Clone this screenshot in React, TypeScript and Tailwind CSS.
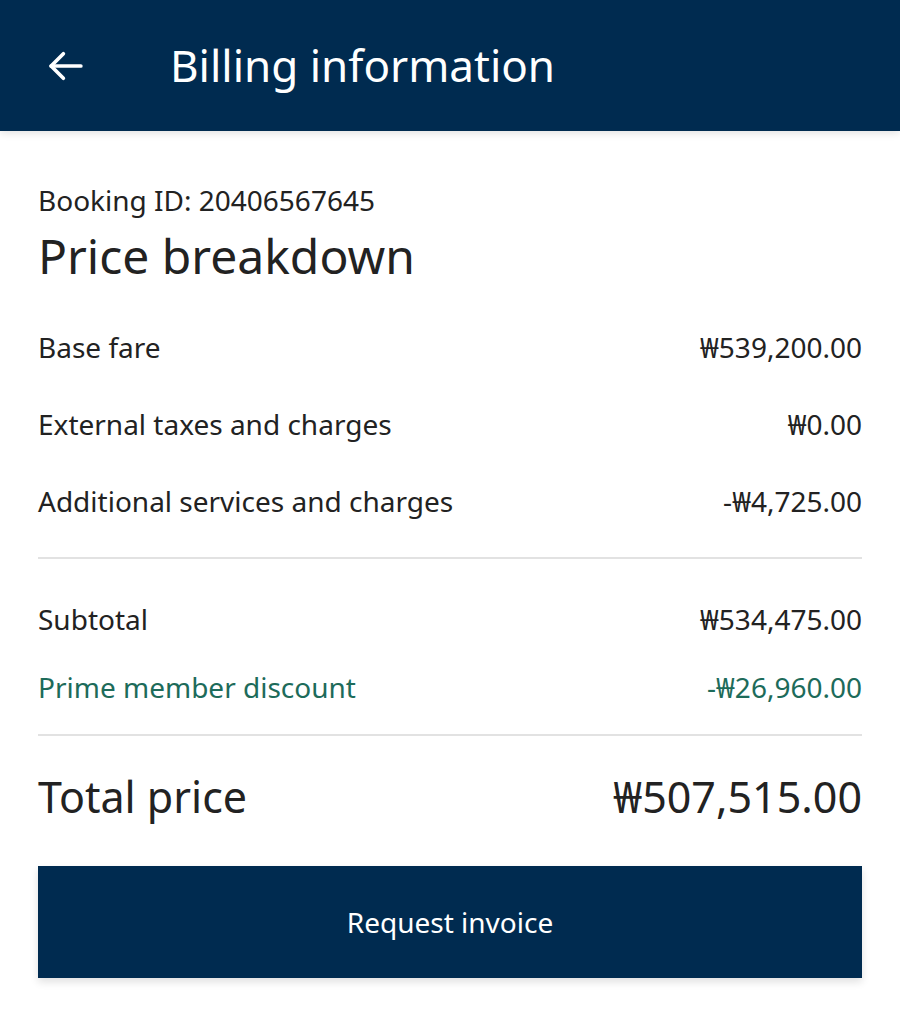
import React from 'react';

const rows = [
  { label: 'Base fare', value: '₩539,200.00' },
  { label: 'External taxes and charges', value: '₩0.00' },
  { label: 'Additional services and charges', value: '-₩4,725.00' },
];

const App = () => {
  return (
    <div className="min-h-[1027px] w-[900px] bg-white text-[#222222] font-['Noto_Sans',sans-serif]">
      {/* header */}
      <header className="flex h-[131px] items-center bg-[#002b50] shadow-[0_2px_8px_rgba(0,0,0,0.12)]">
        <div className="flex w-[170px] pl-[45px]">
          <svg width="42" height="42" viewBox="0 0 24 24" fill="none" stroke="white" strokeWidth="2.1" strokeLinecap="round" strokeLinejoin="round">
            <path d="M20.5 12H3.5" />
            <path d="M10.5 5l-7 7 7 7" />
          </svg>
        </div>
        <h1 className="text-[44px] font-normal text-white leading-none pb-[2px]">Billing information</h1>
      </header>

      <main className="px-[38px] pt-[49px]">
        <p className="text-[28px] leading-[40px]">Booking ID: 20406567645</p>
        <h2 className="text-[48px] leading-[60px] mt-[6px]">Price breakdown</h2>

        <div className="mt-[41px] flex flex-col gap-[37px] pb-[36px] border-b-2 border-[#e2e2e2]">
          {rows.map((r) => (
            <div key={r.label} className="flex justify-between text-[28px] leading-[40px]">
              <span>{r.label}</span>
              <span>{r.value}</span>
            </div>
          ))}
        </div>

        <div className="pt-[40px] pb-[27px] flex flex-col gap-[28px] border-b-2 border-[#e2e2e2]">
          <div className="flex justify-between text-[28px] leading-[40px]">
            <span>Subtotal</span>
            <span>₩534,475.00</span>
          </div>
          <div className="flex justify-between text-[28px] leading-[40px] text-[#1d6b5a]">
            <span>Prime member discount</span>
            <span>-₩26,960.00</span>
          </div>
        </div>

        <div className="flex justify-between items-center h-[122px] text-[43px]">
          <span>Total price</span>
          <span>₩507,515.00</span>
        </div>

        <button className="mt-[8px] flex h-[112px] w-full items-center justify-center bg-[#002b50] text-[28px] text-white shadow-[0_4px_8px_rgba(0,0,0,0.12)]">
          Request invoice
        </button>
      </main>
    </div>
  );
};

export default App;
